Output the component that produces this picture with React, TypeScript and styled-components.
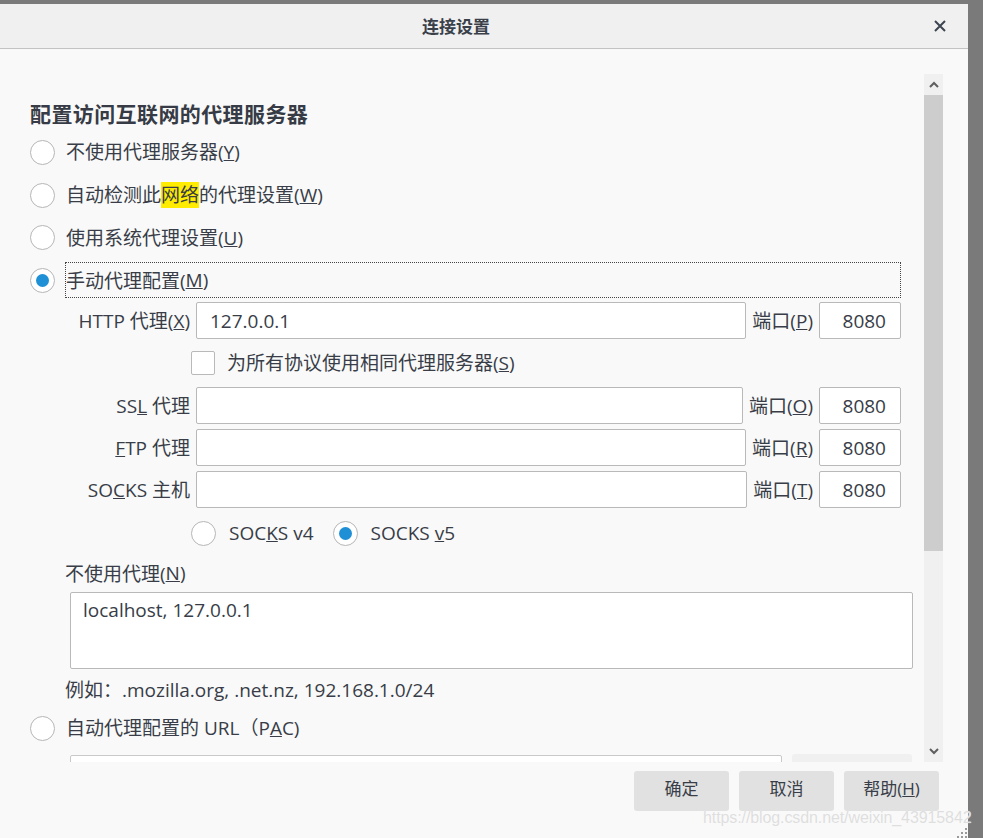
import React from 'react';
import styled, { createGlobalStyle } from 'styled-components';

const GlobalStyle = createGlobalStyle`
  html, body { margin: 0; padding: 0; }
  body {
    background: #7a7a7a;
    font-family: "Open Sans", "Noto Sans CJK SC", sans-serif;
    color: #383d47;
  }
`;

const Screen = styled.div`
  position: relative;
  width: 983px;
  height: 838px;
  padding-top: 4px;
  box-sizing: border-box;
  overflow: hidden;
  background: #7a7a7a;
`;

const Dialog = styled.div`
  width: 968px;
  height: 834px;
  display: flex;
  flex-direction: column;
  background: #f9f9f9;
  border-top-right-radius: 4px;
`;

const TitleBar = styled.div`
  flex: none;
  height: 44px;
  display: grid;
  grid-template-columns: 1fr 56px;
  align-items: center;
  background: #f0f0f0;
  border-bottom: 1px solid #c3c3c3;
`;

const Title = styled.div`
  text-align: center;
  font-family: "Noto Sans CJK SC", sans-serif;
  font-size: 17px;
  font-weight: 700;
  line-height: 24px;
  color: #3a404a;
`;

const CloseBtn = styled.div`
  display: flex;
  justify-content: center;
  align-items: center;
  height: 44px;
`;

const Main = styled.div`
  flex: 1;
  display: flex;
  min-height: 0;
`;

const Content = styled.div`
  flex: 1;
  overflow: hidden;
  padding: 0 23px 0 30px;
  font-size: 19px;
`;

const Heading = styled.div`
  margin: 49px 0 2px;
  font-family: "Noto Sans CJK SC", sans-serif;
  font-size: 21px;
  font-weight: 700;
  line-height: 30px;
  letter-spacing: 0.4px;
  color: #363b45;
`;

const RadioRow = styled.div<{ $h: number }>`
  display: flex;
  align-items: center;
  height: ${p => p.$h}px;
`;

const RadioCircle = styled.span<{ $on?: boolean }>`
  flex: none;
  position: relative;
  width: 25px;
  height: 25px;
  box-sizing: border-box;
  border: 1px solid #b6b6b6;
  border-radius: 50%;
  background: #fff;
  margin-right: 11px;
  &::after {
    content: '';
    display: ${p => (p.$on ? 'block' : 'none')};
    position: absolute;
    left: 5px;
    top: 5px;
    width: 13px;
    height: 13px;
    border-radius: 50%;
    background: #1f8fd6;
  }
`;

const Label = styled.span`
  line-height: 26px;
  white-space: nowrap;
`;

const FocusLabel = styled.span`
  flex: 1;
  display: flex;
  align-items: center;
  height: 36px;
  box-sizing: border-box;
  margin-left: -1px;
  border: 1px dotted #444;
  white-space: nowrap;
`;

const Mark = styled.span`
  background: #ffec00;
`;

const ProxyRow = styled.div<{ $top: number }>`
  display: flex;
  align-items: center;
  gap: 6px;
  height: 37px;
  margin-top: ${p => p.$top}px;
  padding-left: 35px;
`;

const RowLabel = styled.span`
  flex: none;
  width: 125px;
  text-align: right;
  white-space: nowrap;
  line-height: 26px;
`;

const PortLabel = styled.span`
  flex: none;
  white-space: nowrap;
  line-height: 26px;
`;

const TextBox = styled.div`
  flex: 1;
  height: 37px;
  box-sizing: border-box;
  display: flex;
  align-items: center;
  padding-left: 13px;
  background: #fff;
  border: 1px solid #b9b9b9;
  border-radius: 2px;
`;

const PortBox = styled(TextBox)`
  flex: none;
  width: 82px;
  justify-content: flex-end;
  padding: 0 14px 0 0;
`;

const SubRow = styled.div<{ $h: number }>`
  display: flex;
  align-items: center;
  height: ${p => p.$h}px;
  padding-left: 161px;
`;

const CheckBox = styled.span`
  flex: none;
  width: 24px;
  height: 24px;
  box-sizing: border-box;
  border: 1px solid #b9b9b9;
  border-radius: 2px;
  background: #fff;
  margin-right: 12px;
`;

const SubRadio = styled(RadioCircle)`
  margin-right: 13px;
`;

const Gap = styled.span`
  width: 19px;
`;

const PlainRow = styled.div<{ $h: number }>`
  display: flex;
  align-items: center;
  height: ${p => p.$h}px;
  padding-left: 35px;
  white-space: nowrap;
`;

const TextArea = styled.div`
  margin: 4px 0 0 40px;
  width: 843px;
  height: 77px;
  box-sizing: border-box;
  padding: 4px 12px;
  line-height: 26px;
  background: #fff;
  border: 1px solid #b9b9b9;
  border-radius: 2px;
`;

const PacRow = styled.div`
  display: flex;
  gap: 10px;
  margin: 8px 0 0 40px;
`;

const PacInput = styled.div`
  flex: none;
  width: 712px;
  height: 37px;
  box-sizing: border-box;
  background: #fff;
  border: 1px solid #c9c9c9;
  border-radius: 2px;
`;

const PacButton = styled.div`
  flex: none;
  width: 120px;
  height: 37px;
  margin-top: -1px;
  background: #f0f0f0;
  border-radius: 3px;
`;

const ScrollBar = styled.div`
  flex: none;
  width: 19px;
  margin: 25px 25px 0 0;
  display: flex;
  flex-direction: column;
  background: #f0f0f0;
`;

const ScrollArrow = styled.div`
  height: 21px;
  display: flex;
  align-items: center;
  justify-content: center;
  background: #f0f0f0;
`;

const Thumb = styled.div`
  height: 456px;
  background: #cdcdcd;
`;

const Track = styled.div`
  flex: 1;
`;

const Footer = styled.div`
  flex: none;
  height: 76px;
  display: flex;
  justify-content: flex-end;
  align-items: flex-start;
  gap: 10px;
  padding: 9px 29px 0 0;
  box-sizing: border-box;
`;

const Button = styled.div`
  width: 95px;
  height: 40px;
  box-sizing: border-box;
  padding-bottom: 4px;
  display: flex;
  align-items: center;
  justify-content: center;
  background: #e1e1e1;
  border-radius: 3px;
  font-family: "Open Sans", "Noto Sans CJK SC", sans-serif;
  font-size: 17px;
  line-height: 24px;
  color: #383d47;
`;

const Watermark = styled.div`
  position: absolute;
  left: 703px;
  top: 809px;
  font-family: "Liberation Sans", Arial, sans-serif;
  font-size: 16px;
  color: #dedede;
  text-shadow: 0 0 1px #ffffff;
  white-space: nowrap;
  letter-spacing: -0.1px;
`;

const Grip = styled.svg`
  position: absolute;
  right: 15px;
  bottom: 0;
`;

const Chevron = ({ up }: { up?: boolean }) => (
  <svg width="10" height="7" viewBox="0 0 10 7">
    <path
      d={up ? 'M1 6 L5 2 L9 6' : 'M1 1 L5 5 L9 1'}
      fill="none"
      stroke="#5f5f5f"
      strokeWidth="2"
    />
  </svg>
);

export default function App() {
  return (
    <Screen>
      <GlobalStyle />
      <Dialog>
        <TitleBar>
          <Title>连接设置</Title>
          <CloseBtn>
            <svg width="12" height="12" viewBox="0 0 12 12">
              <path d="M1 1 L11 11 M11 1 L1 11" stroke="#3d4550" strokeWidth="2" />
            </svg>
          </CloseBtn>
        </TitleBar>
        <Main>
          <Content>
            <Heading>配置访问互联网的代理服务器</Heading>
            <RadioRow $h={44}>
              <RadioCircle />
              <Label>不使用代理服务器(<u>Y</u>)</Label>
            </RadioRow>
            <RadioRow $h={42}>
              <RadioCircle />
              <Label>自动检测此<Mark>网络</Mark>的代理设置(<u>W</u>)</Label>
            </RadioRow>
            <RadioRow $h={43}>
              <RadioCircle />
              <Label>使用系统代理设置(<u>U</u>)</Label>
            </RadioRow>
            <RadioRow $h={42}>
              <RadioCircle $on />
              <FocusLabel>手动代理配置(<u>M</u>)</FocusLabel>
            </RadioRow>

            <ProxyRow $top={1}>
              <RowLabel>HTTP 代理(<u>X</u>)</RowLabel>
              <TextBox>127.0.0.1</TextBox>
              <PortLabel>端口(<u>P</u>)</PortLabel>
              <PortBox>8080</PortBox>
            </ProxyRow>
            <SubRow $h={48}>
              <CheckBox />
              <Label>为所有协议使用相同代理服务器(<u>S</u>)</Label>
            </SubRow>
            <ProxyRow $top={0}>
              <RowLabel>SS<u>L</u> 代理</RowLabel>
              <TextBox />
              <PortLabel>端口(<u>O</u>)</PortLabel>
              <PortBox>8080</PortBox>
            </ProxyRow>
            <ProxyRow $top={5}>
              <RowLabel><u>F</u>TP 代理</RowLabel>
              <TextBox />
              <PortLabel>端口(<u>R</u>)</PortLabel>
              <PortBox>8080</PortBox>
            </ProxyRow>
            <ProxyRow $top={5}>
              <RowLabel>SO<u>C</u>KS 主机</RowLabel>
              <TextBox />
              <PortLabel>端口(<u>T</u>)</PortLabel>
              <PortBox>8080</PortBox>
            </ProxyRow>
            <SubRow $h={50}>
              <SubRadio />
              <Label>SOC<u>K</u>S v4</Label>
              <Gap />
              <SubRadio $on />
              <Label>SOCKS <u>v</u>5</Label>
            </SubRow>

            <PlainRow $h={30}>不使用代理(<u>N</u>)</PlainRow>
            <TextArea>localhost, 127.0.0.1</TextArea>
            <PlainRow $h={40}>例如：.mozilla.org, .net.nz, 192.168.1.0/24</PlainRow>
            <RadioRow $h={38}>
              <RadioCircle />
              <Label>自动代理配置的 URL（P<u>A</u>C)</Label>
            </RadioRow>
            <PacRow>
              <PacInput />
              <PacButton />
            </PacRow>
          </Content>
          <ScrollBar>
            <ScrollArrow><Chevron up /></ScrollArrow>
            <Thumb />
            <Track />
            <ScrollArrow><Chevron /></ScrollArrow>
          </ScrollBar>
        </Main>
        <Footer>
          <Button>确定</Button>
          <Button>取消</Button>
          <Button>帮助(<u>H</u>)</Button>
        </Footer>
      </Dialog>
      <Watermark>https://blog.csdn.net/weixin_43915842</Watermark>
      <Grip width="13" height="12" viewBox="0 0 13 12">
        <g fill="#9a9a9a">
          <rect x="10" y="2" width="2" height="2" />
          <rect x="6" y="6" width="2" height="2" />
          <rect x="10" y="6" width="2" height="2" />
          <rect x="2" y="10" width="2" height="2" />
          <rect x="6" y="10" width="2" height="2" />
          <rect x="10" y="10" width="2" height="2" />
        </g>
      </Grip>
    </Screen>
  );
}
